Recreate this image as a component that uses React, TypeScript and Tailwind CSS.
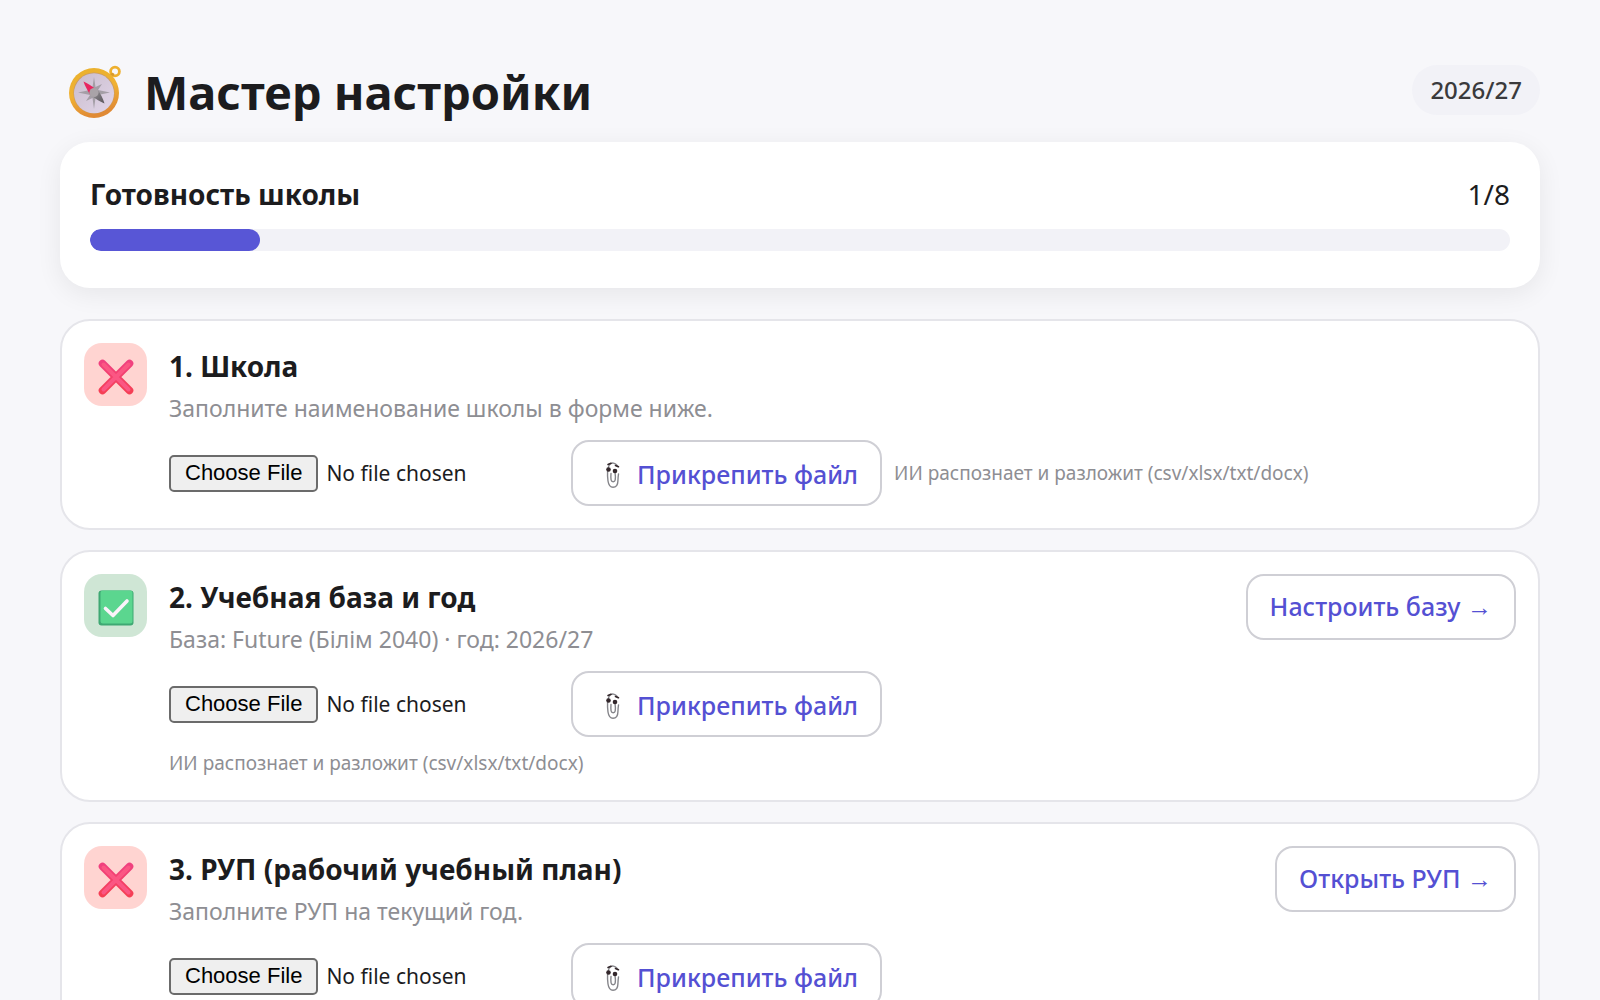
import React from 'react';

interface Step {
  title: string;
  description: string;
  done: boolean;
  action?: string;
}

const steps: Step[] = [
  {
    title: '1. Школа',
    description: 'Заполните наименование школы в форме ниже.',
    done: false
  },
  {
    title: '2. Учебная база и год',
    description: 'База: Future (Білім 2040) · год: 2026/27',
    done: true,
    action: 'Настроить базу →'
  },
  {
    title: '3. РУП (рабочий учебный план)',
    description: 'Заполните РУП на текущий год.',
    done: false,
    action: 'Открыть РУП →'
  }
];

function CompassIcon() {
  return (
    <svg viewBox="0 0 54 54" className="size-[54px]" aria-hidden="true">
      <defs>
        <linearGradient id="compass-rim" x1="0" y1="0" x2="0.3" y2="1">
          <stop offset="0" stopColor="#e9b12c" />
          <stop offset="0.55" stopColor="#f0b133" />
          <stop offset="1" stopColor="#e08a35" />
        </linearGradient>
        <linearGradient id="compass-face" x1="0" y1="0" x2="1" y2="1">
          <stop offset="0" stopColor="#c9bccb" />
          <stop offset="1" stopColor="#e2d6ea" />
        </linearGradient>
        <linearGradient id="compass-south" x1="0" y1="0" x2="1" y2="1">
          <stop offset="0" stopColor="#9a969b" />
          <stop offset="1" stopColor="#58545a" />
        </linearGradient>
      </defs>
      <circle cx="47" cy="6.5" r="4.4" fill="none" stroke="#eeb02f" strokeWidth="2.8" />
      <path d="M41.500 12l3-2.500" stroke="#d9992a" strokeWidth="3.4" strokeLinecap="round" />
      <circle cx="26" cy="28" r="25" fill="url(#compass-rim)" />
      <circle cx="26" cy="28" r="20.6" fill="#c99a62" />
      <circle cx="26" cy="28.3" r="20" fill="url(#compass-face)" />
      <path
        d="M26 12l1.500 10 6.500-3-4 6 12 2.500-12 2.500 4 6-6.500-3-1.500 11-1.500-11-6.500 3 4-6-12-2.500 12-2.500-4-6 6.500 3z"
        fill="#a49ea6"
      />
      <path d="M15.500 16.500c4 1.500 8 4.500 12 7.500l-5 6c-3-4.500-5.500-9-7-13.500z" fill="#e8245f" />
      <path d="M36.500 38.500c-4-1.500-9-4.500-13-8l5.500-6.500c3.500 4.500 6 9.500 7.500 14.500z" fill="url(#compass-south)" />
      <circle cx="26" cy="27.500" r="4.600" fill="#a9a3a8" />
    </svg>
  );
}

function CrossIcon() {
  return (
    <svg viewBox="0 0 36 36" className="size-9" aria-hidden="true">
      <defs>
        <linearGradient id="cross-edge" x1="0" y1="0" x2="0" y2="1">
          <stop offset="0" stopColor="#f0417f" />
          <stop offset="1" stopColor="#f53f55" />
        </linearGradient>
      </defs>
      <path d="M4.500 4.500l27 27M31.500 4.500l-27 27" stroke="url(#cross-edge)" strokeWidth="7.600" strokeLinecap="round" />
      <path d="M5.500 5.500l25 25M30.500 5.500l-25 25" stroke="#fb5683" strokeWidth="4" strokeLinecap="round" />
    </svg>
  );
}

function CheckIcon() {
  return (
    <svg viewBox="0 0 36 36" className="size-9" aria-hidden="true">
      <rect x="0.500" y="0.500" width="35" height="35" rx="3" fill="#3fa873" />
      <rect x="2.500" y="0.500" width="32" height="33" rx="2.500" fill="#5bd68f" />
      <path d="M7.500 18.500l7.500 7 14-14.500" fill="none" stroke="#fbf3fb" strokeWidth="3.600" strokeLinecap="round" strokeLinejoin="round" />
    </svg>
  );
}

function PaperclipIcon() {
  return (
    <svg viewBox="0 0 16 28" className="h-7 w-4" fill="none" aria-hidden="true">
      <path
        d="M12.500 5.500C11 1.500 6 .8 4 4.500 2.500 8 2.200 14 3 20c.6 4 2.600 6.300 5 6.300 3 0 4.800-2.500 4.900-6.300.1-2.500.3-5 .6-7M10 11c.4 3 .6 6 .2 8-.4 2.300-3.700 2.300-4.100 0-.3-2-.3-4.500-.1-6.500"
        stroke="#85858a"
        strokeWidth="1.400"
        strokeLinecap="round"
      />
      <path d="M3 3.500l3-1.200M10.500 4.500l3 1.200" stroke="#33272b" strokeWidth="1.600" strokeLinecap="round" />
      <circle cx="3.500" cy="8.500" r="2.300" fill="#33272b" />
      <circle cx="10" cy="10" r="2.300" fill="#33272b" />
    </svg>
  );
}

function OutlineButton({ children }: { children: React.ReactNode }) {
  return (
    <button
      type="button"
      className="flex h-[66px] shrink-0 items-center rounded-[18px] border-2 border-[#cfcfd5] bg-white px-[22px] text-[25px] font-medium whitespace-nowrap text-[#5450d3]"
    >
      {children}
    </button>
  );
}

function StepCard({ title, description, done, action }: Step) {
  return (
    <section className="flex items-start gap-[22px] rounded-[30px] border-2 border-[#e5e5ea] bg-white p-[22px]">
      <div
        className={`flex size-[63px] shrink-0 items-center justify-center rounded-[18px] pt-1 ${
          done ? 'bg-[#cfe6d5]' : 'bg-[#ffd4d1]'
        }`}
      >
        {done ? <CheckIcon /> : <CrossIcon />}
      </div>

      <div className="min-w-0 flex-1">
        <h2 className="text-[28px] leading-[46px] font-bold">{title}</h2>
        <p className="text-[23px] leading-[39px] text-[#8e8e93]">{description}</p>
        <div className="mt-3 flex flex-wrap items-center gap-3">
          <input
            type="file"
            aria-label={title}
            className="w-[390px] text-[21px] file:mr-2 file:h-[37px] file:rounded-[5px] file:border-2 file:border-solid file:border-[#6b6b6b] file:bg-[#efefef] file:px-[14px] file:font-['Liberation_Sans',sans-serif] file:text-[22px] file:leading-8 file:text-black"
          />
          <OutlineButton>
            <span className="flex items-center gap-4 pt-1 pl-[10px]">
              <PaperclipIcon />
              Прикрепить файл
            </span>
          </OutlineButton>
          <span className="text-[19px] leading-[29px] text-[#8e8e93]">
            ИИ распознает и разложит (csv/xlsx/txt/docx)
          </span>
        </div>
      </div>

      {action && <OutlineButton>{action}</OutlineButton>}
    </section>
  );
}

export default function App() {
  const ready = 12;

  return (
    <main className="min-h-screen bg-[#f7f7fa] px-[60px] py-[60px] font-['Noto_Sans','Open_Sans',sans-serif] text-[#1c1c1e]">
      <header className="flex h-[82px] items-start justify-between">
        <h1 className="flex h-[64px] items-center gap-[22px] pl-2 text-[47px] leading-none font-bold">
          <CompassIcon />
          Мастер настройки
        </h1>
        <span className="mt-[5px] flex h-[50px] items-center rounded-full bg-[#f2f2f7] px-[18px] text-[24px] font-medium text-[#3a3a3c]">
          2026/27
        </span>
      </header>

      <section className="mb-[31px] rounded-[30px] bg-white px-[30px] pt-[30px] pb-[37px] shadow-[0_6px_26px_rgba(0,0,0,0.07)]">
        <div className="flex items-center justify-between leading-[45px]">
          <h2 className="text-[28px] font-bold">Готовность школы</h2>
          <span className="text-[28px]">1/8</span>
        </div>
        <div className="mt-3 h-[22px] overflow-hidden rounded-full bg-[#f2f2f7]">
          <div className="h-full rounded-full bg-[#5856d6]" style={{ width: `${ready}%` }} />
        </div>
      </section>

      <div className="flex flex-col gap-5">
        {steps.map((step) => (
          <StepCard key={step.title} {...step} />
        ))}
      </div>
    </main>
  );
}
